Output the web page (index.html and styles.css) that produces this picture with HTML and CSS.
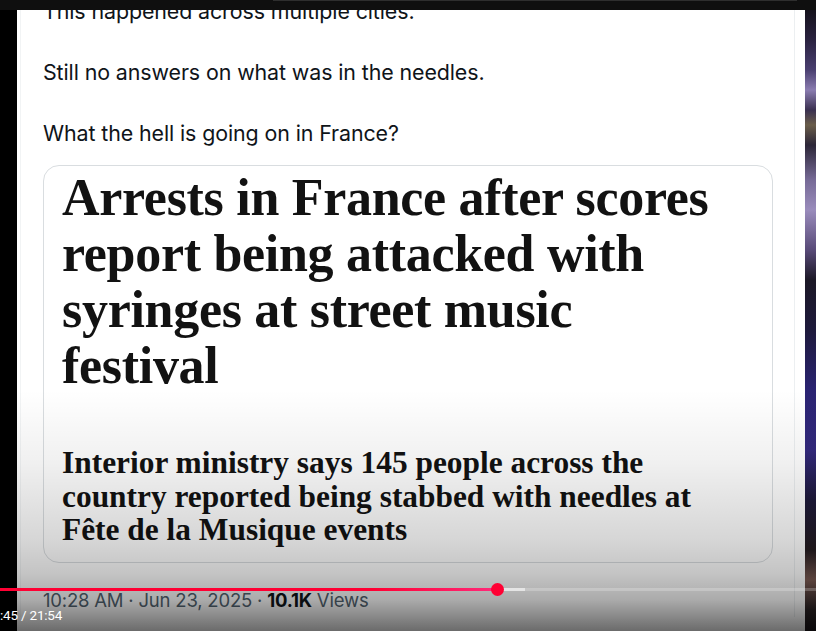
FILE: index.html
```html
<!DOCTYPE html>
<html lang="en">
<head>
    <meta charset="UTF-8">
    <meta name="viewport" content="width=device-width, initial-scale=1.0">
    <title>Tweet - video frame</title>
    <link rel="stylesheet" href="styles.css">
</head>
<body>

    <div class="player">
        <div class="topbar">
            <div class="search-edge"></div>
        </div>

        <div class="frame">
            <div class="side-left"></div>

            <div class="panel">
                <div class="column">
                    <div class="tweet-text">
                        <p class="first">This happened across multiple cities.</p>
                        <p>Still no answers on what was in the needles.</p>
                        <p>What the hell is going on in France?</p>
                    </div>

                    <div class="card">
                        <h1 class="headline">Arrests in France after scores report being attacked with syringes at street music festival</h1>
                        <p class="standfirst">Interior ministry says 145 people across the country reported being stabbed with needles at Fête de la Musique events</p>
                    </div>

                    <div class="meta">
                        10:28 AM · Jun 23, 2025 · <b>10.1K</b> Views
                    </div>
                </div>
            </div>

            <div class="side-right"></div>
        </div>

        <div class="overlay">
            <div class="progress">
                <div class="played"></div>
                <div class="buffered"></div>
                <div class="scrubber"></div>
            </div>
            <div class="time">:45 / 21:54</div>
        </div>
    </div>

</body>
</html>
```

FILE: styles.css
```css
* {
    box-sizing: border-box;
}

body {
    margin: 0;
    padding: 0;
    background-color: #000;
    font-family: 'Inter', 'Roboto', sans-serif;
    overflow: hidden;
}

.player {
    position: relative;
    width: 816px;
    height: 631px;
    overflow: hidden;
    background-color: #000;
}

.topbar {
    height: 10px;
    background-color: #0f0f0f;
    position: relative;
    z-index: 2;
}

.search-edge {
    margin-left: 273px;
    width: 524px;
    height: 1px;
    background-color: #2e2e2e;
}

.frame {
    display: flex;
    height: 621px;
}

.side-left {
    width: 17px;
    background-color: #000;
}

.side-right {
    width: 11px;
    background: linear-gradient(to bottom,
        #15121c 0px, #2a2240 30px, #4a3f70 60px, #8a7cb0 80px, #3a3050 100px,
        #6a5d4a 115px, #2c2638 135px, #766a96 170px, #9a8cbc 200px, #584a78 240px,
        #1c1826 270px, #1e1a3c 320px, #2a2372 380px, #33297e 440px, #1e1a3a 490px,
        #241c20 540px, #7a5a52 570px, #2a2224 600px, #1a1418 621px);
}

.panel {
    flex: 1;
    background-color: #fff;
    padding-left: 3px;
    overflow: hidden;
}

.column {
    width: 775px;
    height: 100%;
    border-left: 1px solid #f2f4f5;
    border-right: 1px solid #eceff1;
    padding-left: 22px;
}

.tweet-text p {
    margin: 0 0 30.5px 0;
    font-size: 21.4px;
    line-height: 30.5px;
    color: #0f1419;
    letter-spacing: -0.1px;
}

.tweet-text p.first {
    margin-top: -14.5px;
}

.tweet-text p:last-child {
    margin-bottom: 0;
}

.card {
    margin-top: 17px;
    width: 730px;
    border: 1px solid #d9dde0;
    border-radius: 16px;
    padding: 4px 18px 15px 18px;
    background-color: #fff;
}

.headline {
    margin: 0;
    max-width: 660px;
    font-family: 'Liberation Serif', serif;
    font-weight: bold;
    font-size: 52px;
    line-height: 56px;
    color: #121212;
    letter-spacing: -0.3px;
}

.standfirst {
    margin: 52px 0 0 0;
    max-width: 660px;
    font-family: 'Liberation Serif', serif;
    font-weight: bold;
    font-size: 31.4px;
    line-height: 33.5px;
    color: #121212;
}

.meta {
    margin-top: 22px;
    font-size: 18.5px;
    line-height: 30.5px;
    color: #536471;
    letter-spacing: -0.2px;
}

.meta b {
    color: #0f1419;
    font-weight: 700;
}

/* youtube player chrome over the frame */
.overlay {
    position: absolute;
    left: 0;
    right: 0;
    bottom: 0;
    height: 241px;
    background: linear-gradient(to bottom,
        rgba(0, 0, 0, 0) 0%,
        rgba(0, 0, 0, 0.06) 30%,
        rgba(0, 0, 0, 0.16) 62%,
        rgba(0, 0, 0, 0.23) 76%,
        rgba(0, 0, 0, 0.33) 87%,
        rgba(0, 0, 0, 0.58) 100%);
}

.progress {
    position: absolute;
    left: 0;
    right: 0;
    top: 198px;
    height: 3px;
    background-color: rgba(255, 255, 255, 0.22);
}

.played {
    position: absolute;
    left: 0;
    top: 0;
    width: 497px;
    height: 3px;
    background: linear-gradient(to right, #ff0033 75%, #ff2a7a 100%);
}

.buffered {
    position: absolute;
    left: 497px;
    top: 0;
    width: 28px;
    height: 3px;
    background-color: rgba(255, 255, 255, 0.55);
}

.scrubber {
    position: absolute;
    left: 491px;
    top: -5px;
    width: 13px;
    height: 13px;
    border-radius: 50%;
    background-color: #ff0033;
}

.time {
    position: absolute;
    left: 0;
    top: 217px;
    font-family: 'Roboto', sans-serif;
    font-size: 13.5px;
    line-height: 16px;
    color: #fff;
    letter-spacing: -0.2px;
}
```
